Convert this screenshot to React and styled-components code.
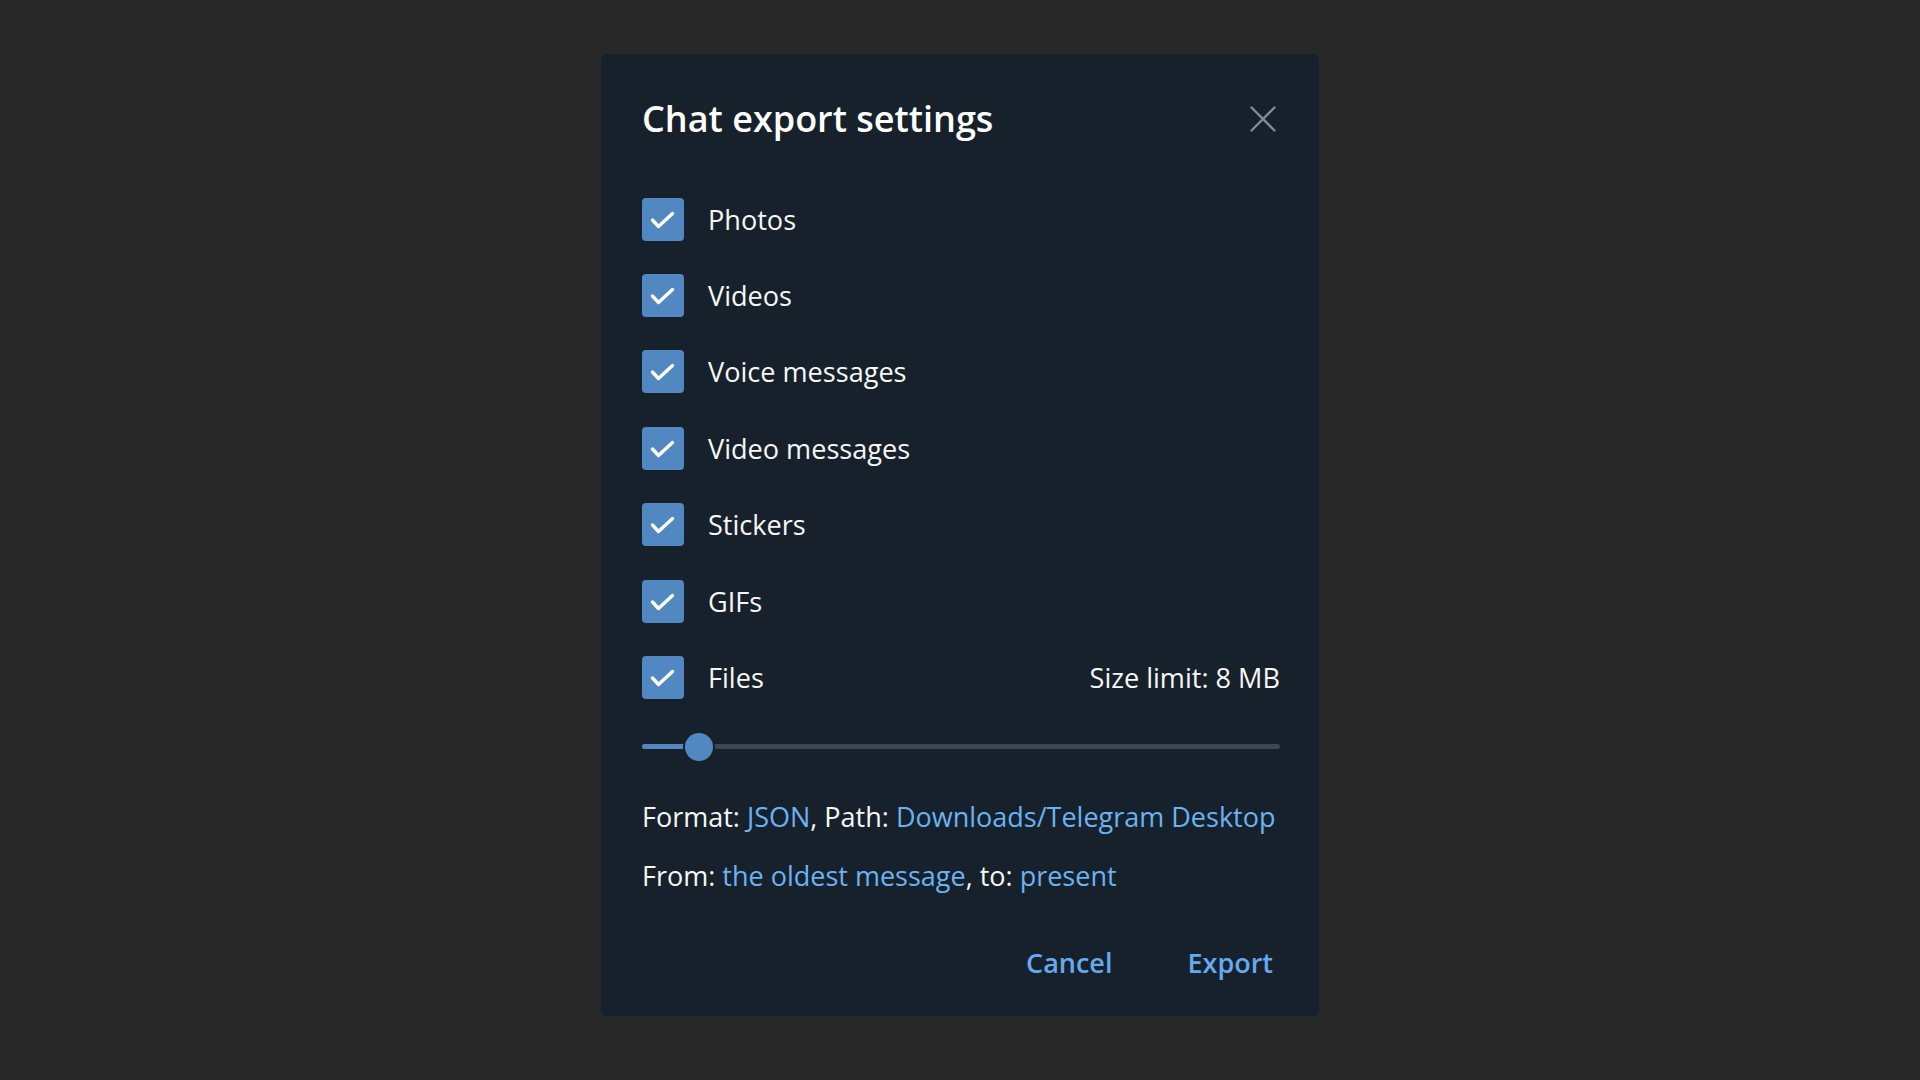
import React from 'react';
import styled, { createGlobalStyle } from 'styled-components';

const GlobalStyle = createGlobalStyle`
  html, body {
    margin: 0;
    padding: 0;
    background: #282828;
    font-family: "Open Sans", "Noto Sans", sans-serif;
  }
`;

const Page = styled.div`
  width: 1920px;
  height: 1080px;
  display: flex;
  justify-content: center;
  align-items: flex-start;
  padding-top: 54px;
  box-sizing: border-box;
`;

const Dialog = styled.div`
  width: 718px;
  height: 962px;
  background: #17212b;
  border-radius: 6px;
  padding: 0 39px 0 41px;
  box-sizing: border-box;
  display: flex;
  flex-direction: column;
  color: #f7f7f7;
`;

const Header = styled.div`
  height: 127px;
  display: flex;
  align-items: center;
  justify-content: space-between;
  padding-top: 2px;
  box-sizing: border-box;
`;

const Title = styled.h1`
  margin: 0;
  font-size: 36px;
  font-weight: 600;
  color: #ffffff;
`;

const CloseButton = styled.button`
  background: none;
  border: none;
  padding: 0;
  margin-right: 2px;
  width: 30px;
  height: 30px;
  display: flex;
  align-items: center;
  justify-content: center;
  cursor: pointer;
`;

const Row = styled.label`
  height: 76.4px;
  display: flex;
  align-items: center;
  gap: 24px;
  font-size: 27.1px;
`;

const Box = styled.span`
  width: 42px;
  height: 43px;
  border-radius: 4px;
  background: #5288c1;
  display: flex;
  align-items: center;
  justify-content: center;
  flex-shrink: 0;
`;

const Label = styled.span`
  flex: 1;
`;

const Aside = styled.span`
  font-size: 27.1px;
`;

const SliderWrap = styled.div`
  height: 62px;
  display: flex;
  align-items: center;
`;

const Track = styled.div`
  position: relative;
  width: 100%;
  height: 5px;
  border-radius: 3px;
  background: #3a4653;
`;

const Fill = styled.div`
  position: absolute;
  left: 0;
  top: 0;
  bottom: 0;
  width: ${p => p.$value}%;
  border-radius: 3px;
  background: #5288c1;
`;

const Thumb = styled.div`
  position: absolute;
  top: 50%;
  left: ${p => p.$value}%;
  width: 28px;
  height: 28px;
  margin: -14px 0 0 -14px;
  border-radius: 50%;
  background: #5288c1;
  box-shadow: 0 0 0 2px #17212b;
`;

const Info = styled.div`
  margin-top: 9px;
  font-size: 27px;
`;

const InfoLine = styled.div`
  height: 59px;
  display: flex;
  align-items: center;
  white-space: pre;
`;

const Link = styled.span`
  color: #6ab3f3;
`;

const Buttons = styled.div`
  margin-top: 18px;
  height: 80px;
  display: flex;
  align-items: center;
  justify-content: flex-end;
  gap: 75px;
  padding-right: 7px;
`;

const TextButton = styled.button`
  background: none;
  border: none;
  padding: 0;
  font-family: inherit;
  font-size: 27px;
  font-weight: 600;
  color: #64aaf0;
  cursor: pointer;
`;

const Check = () => (
  <svg width="42" height="43" viewBox="0 0 42 43">
    <polyline points="10.5,22 16.5,28.5 30.5,15.5" fill="none" stroke="#fff"
              strokeWidth="3.4" strokeLinecap="round" strokeLinejoin="round" />
  </svg>
);

const CloseIcon = () => (
  <svg width="26" height="26" viewBox="0 0 26 26">
    <path d="M1.5 1.5 L24.5 24.5 M24.5 1.5 L1.5 24.5" stroke="#7f8b97"
          strokeWidth="2.4" strokeLinecap="round" />
  </svg>
);

const options = ['Photos', 'Videos', 'Voice messages', 'Video messages', 'Stickers', 'GIFs', 'Files'];

const App = () => (
  <Page>
    <GlobalStyle />
    <Dialog>
      <Header>
        <Title>Chat export settings</Title>
        <CloseButton aria-label="Close"><CloseIcon /></CloseButton>
      </Header>
      {options.map(name => (
        <Row key={name}>
          <Box><Check /></Box>
          <Label>{name}</Label>
          {name === 'Files' && <Aside>Size limit: 8 MB</Aside>}
        </Row>
      ))}
      <SliderWrap>
        <Track>
          <Fill $value={9} />
          <Thumb $value={9} />
        </Track>
      </SliderWrap>
      <Info>
        <InfoLine>Format: <Link>JSON</Link>, Path: <Link>Downloads/Telegram Desktop</Link></InfoLine>
        <InfoLine>From: <Link>the oldest message</Link>, to: <Link>present</Link></InfoLine>
      </Info>
      <Buttons>
        <TextButton>Cancel</TextButton>
        <TextButton>Export</TextButton>
      </Buttons>
    </Dialog>
  </Page>
);

export default App;
